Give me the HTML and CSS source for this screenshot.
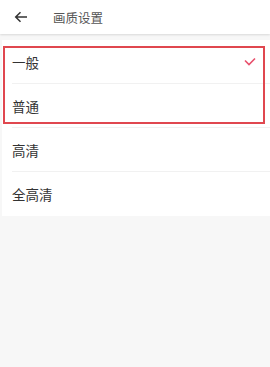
FILE: index.html
```html
<!DOCTYPE html>
<html lang="zh">
<head>
<meta charset="utf-8">
<link rel="stylesheet" href="styles.css">
</head>
<body>
<div class="page">
  <header class="topbar">
    <svg class="back" width="14" height="12" viewBox="0 0 14 12"><path d="M13 6H2M6.5 1.2L1.7 6l4.8 4.8" fill="none" stroke="#333" stroke-width="1.5"/></svg>
    <span class="title">画质设置</span>
  </header>
  <ul class="list">
    <li class="row"><span>一般</span><svg class="check" width="12" height="9" viewBox="0 0 12 9"><path d="M1 3.5l4 4 6-6" fill="none" stroke="#e8506c" stroke-width="1.6"/></svg></li>
    <li class="row"><span>普通</span></li>
    <li class="row"><span>高清</span></li>
    <li class="row"><span>全高清</span></li>
  </ul>
  <div class="highlight"></div>
</div>
</body>
</html>
```

FILE: styles.css
```css
html, body { margin: 0; padding: 0; }
body {
  background: #f7f7f7;
  font-family: "Noto Sans CJK SC", "Noto Sans", sans-serif;
  color: #333;
}
.page { position: relative; width: 270px; height: 367px; }
.topbar {
  height: 34px;
  background: #fff;
  display: flex;
  align-items: center;
  box-shadow: 0 1px 2px rgba(0,0,0,0.12);
  position: relative;
  z-index: 1;
}
.back { margin-left: 14px; }
.title { margin-left: 25px; font-size: 12.5px; color: #555; }
.list {
  list-style: none;
  margin: 6px 0 0 2px;
  padding: 0;
  background: #fff;
}
.row {
  height: 43px;
  display: flex;
  align-items: center;
  justify-content: space-between;
  margin-left: 10px;
  padding-right: 14px;
  font-size: 13.5px;
  border-bottom: 1px solid #f1f1f1;
}
.row:last-child { border-bottom: none; height: 44px; }
.check { margin-top: -1px; }
.highlight {
  position: absolute;
  left: 3px;
  top: 46px;
  width: 258px;
  height: 74px;
  border: 2px solid #e0474f;
}
```
